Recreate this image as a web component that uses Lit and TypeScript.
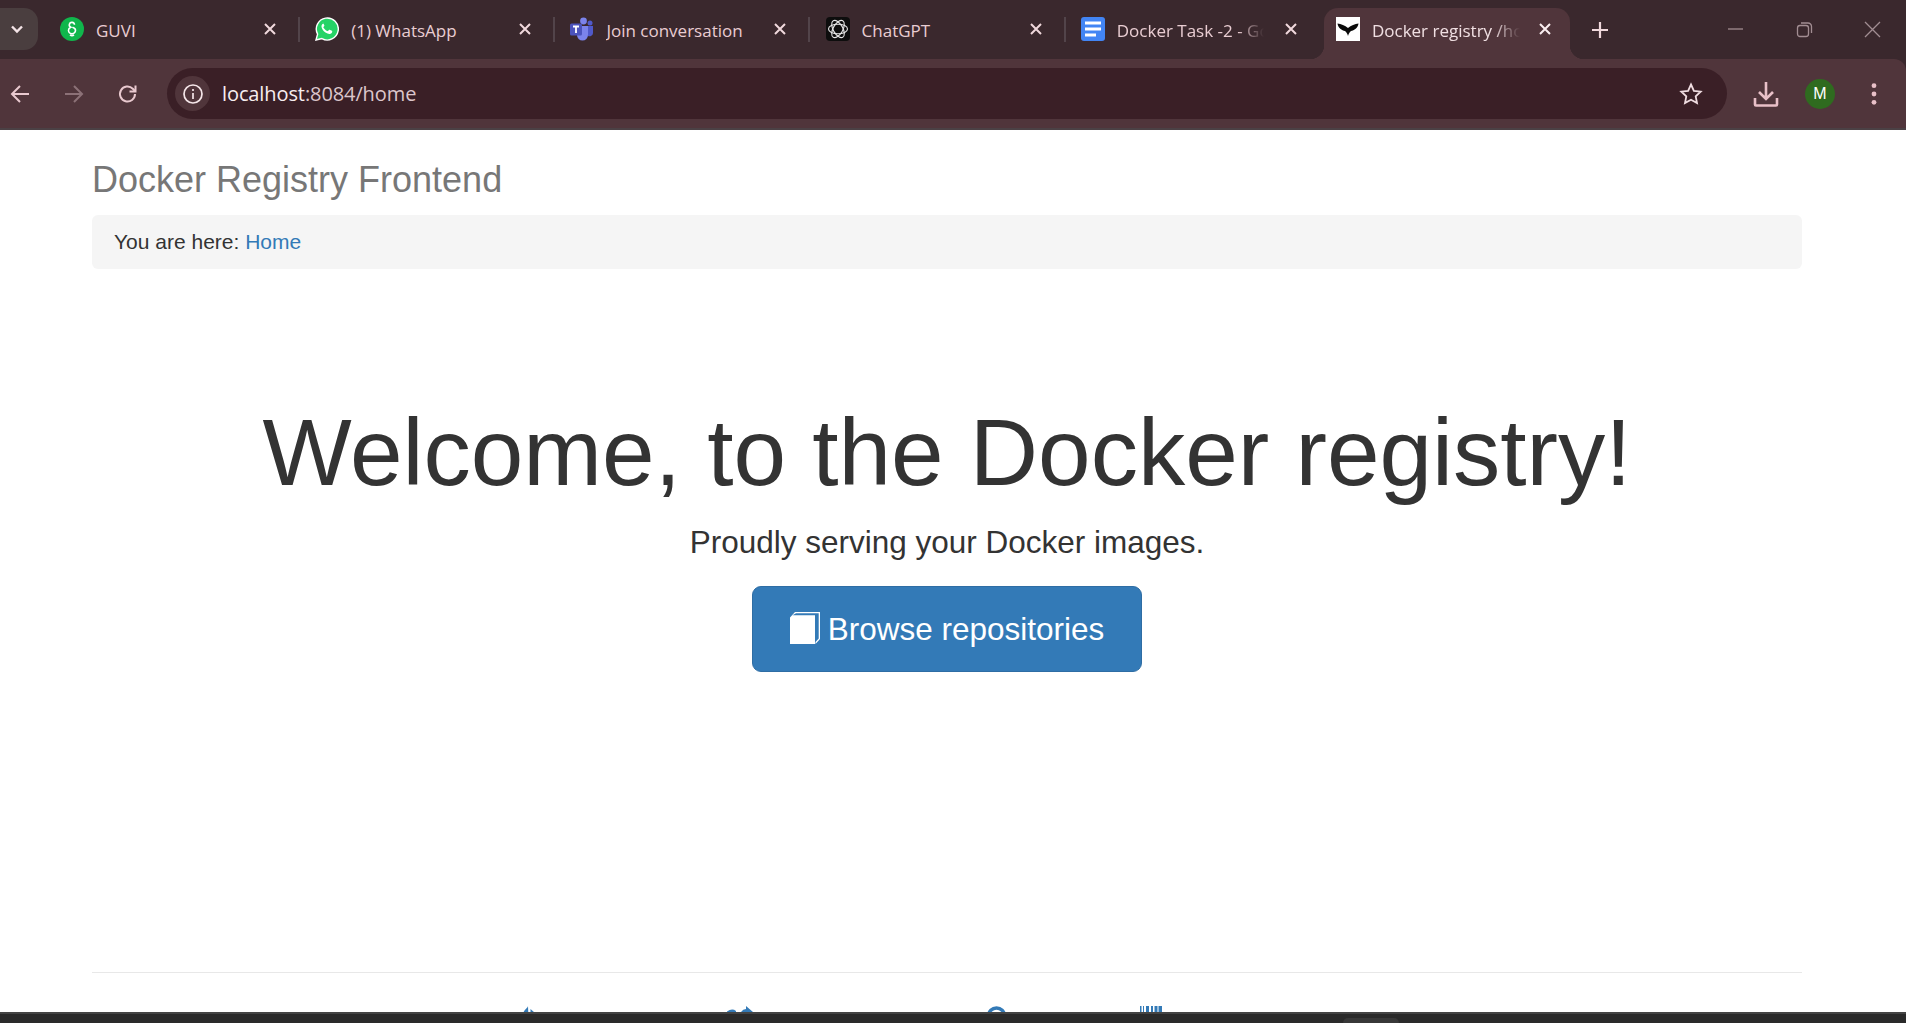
import { LitElement, css, html, svg } from 'lit';
import { customElement } from 'lit/decorators.js';

const closeIcon = html`<svg class="close" viewBox="0 0 14 14"><path d="M2 2l10 10M12 2L2 12" /></svg>`;

const favicons = {
  guvi: html`<svg class="fav" viewBox="0 0 24 24">
    <circle cx="12" cy="12" r="12" fill="#10b64c" />
    <path d="M14.500 7.800a2.600 2.600 0 1 0-3.700 2.500c-1.500.7-2.300 1.800-2.300 3a3.500 3.500 0 0 0 7 0c0-1.500-1.500-2.500-3-3M10 17.800c1 .8 3 .8 4 0" fill="none" stroke="#fff" stroke-width="1.600" />
  </svg>`,
  whatsapp: html`<svg class="fav" viewBox="0 0 24 24">
    <path d="M1 23l1.600-5.800A11 11 0 1 1 6.900 21.600z" fill="#25d366" stroke="#fff" stroke-width="1.400" />
    <path d="M8.600 6.500c-.4 0-1 .2-1.400.8-.6.8-.9 1.800-.6 3 .5 2 2 4 3.900 5.200 1.800 1.200 3.700 1.700 5 1.200.9-.3 1.600-1.100 1.700-2 .1-.5 0-.7-.3-.9l-2.300-1.100c-.3-.1-.5-.1-.7.2l-.9 1.100c-.2.200-.4.200-.7.100-1.700-.7-3-1.900-3.900-3.500-.1-.3-.1-.5.100-.7l.7-.9c.2-.2.200-.4.100-.7l-1-2.300c-.2-.4-.4-.5-.7-.5z" fill="#fff" />
  </svg>`,
  teams: html`<svg class="fav" viewBox="0 0 24 24">
    <circle cx="13.500" cy="4" r="3.400" fill="#7b83eb" />
    <circle cx="20" cy="6" r="2.500" fill="#5059c9" />
    <path d="M16 9h7v7a3.500 3.500 0 0 1-5 3z" fill="#5059c9" />
    <path d="M7 9h11v9a5.500 5.500 0 0 1-11 0z" fill="#7b83eb" />
    <rect x="0" y="6.500" width="12" height="12" rx="1.500" fill="#4b53bc" />
    <path d="M3 9.500h6M6 9.500v6.500" stroke="#fff" stroke-width="1.800" fill="none" />
  </svg>`,
  chatgpt: html`<svg class="fav" viewBox="0 0 24 24">
    <rect width="24" height="24" rx="4" fill="#0d0d0d" />
    <g fill="none" stroke="#e6e6e6" stroke-width="1.100">
      <ellipse cx="12" cy="12" rx="9.500" ry="4.800" />
      <ellipse cx="12" cy="12" rx="9.500" ry="4.800" transform="rotate(60 12 12)" />
      <ellipse cx="12" cy="12" rx="9.500" ry="4.800" transform="rotate(120 12 12)" />
    </g>
  </svg>`,
  docs: html`<svg class="fav" viewBox="0 0 24 24">
    <rect width="24" height="24" rx="3" fill="#4285f4" />
    <path d="M4 4.500h16v3H4zM4 10.500h16v3H4zM4 16.500h11v3H4z" fill="#fff" />
  </svg>`,
  registry: html`<svg class="fav" viewBox="0 0 24 24">
    <rect width="24" height="24" fill="#fff" />
    <path d="M1.500 6.500C5 7 9 8.500 12 11c3-2.500 7-4 10.500-4.500C22 11 18 13.500 15 14c-1.500 1-2.500 3-3 5-.5-2-1.500-4-3-5C6 13.500 2 11 1.500 6.500z" fill="#0a0a0a" />
  </svg>`,
};

const tabs = [
  { title: 'GUVI', icon: favicons.guvi },
  { title: '(1) WhatsApp', icon: favicons.whatsapp },
  { title: 'Join conversation', icon: favicons.teams },
  { title: 'ChatGPT', icon: favicons.chatgpt },
  { title: 'Docker Task -2 - Google Docs', icon: favicons.docs },
  { title: 'Docker registry /home', icon: favicons.registry, active: true },
];

const bookPath = svg`<path d="M0 5.500L5 0H30V27L25.500 32V30L28.700 26.500V1.300H6L2.500 3.300H25V32H0z" fill="#fff" />`;

@customElement('app-root')
export class AppRoot extends LitElement {
  static styles = css`
    :host {
      display: flex;
      flex-direction: column;
      height: 1023px;
      overflow: hidden;
      background: #fff;
      font-family: 'Liberation Sans', Arial, sans-serif;
      color: #333;
    }

    .chrome {
      flex: none;
      background: #3a282d;
    }

    .strip {
      height: 59px;
      display: flex;
      font-family: 'Open Sans', sans-serif;
    }

    .tab-search {
      flex: none;
      width: 38px;
      height: 42px;
      margin: 8px 22px 0 0;
      border-radius: 0 14px 14px 0;
      background: #4a3e3f;
      display: flex;
      align-items: center;
      justify-content: center;
    }

    .tab-search svg {
      width: 14px;
      height: 14px;
      margin-left: -4px;
      fill: none;
      stroke: #f4e4e7;
      stroke-width: 2.400;
    }

    .tab {
      flex: none;
      width: 255.200px;
      box-sizing: border-box;
      height: 42px;
      margin-top: 8px;
      display: flex;
      align-items: center;
      position: relative;
    }

    .tab.active {
      width: 246px;
      height: 51px;
      margin-left: -12px;
      padding-left: 12px;
      padding-bottom: 9px;
      border-radius: 14px 14px 0 0;
      background: #50353b;
    }

    .tab.active::before,
    .tab.active::after {
      content: '';
      position: absolute;
      bottom: 0;
      width: 14px;
      height: 14px;
    }

    .tab.active::before {
      left: -14px;
      background: radial-gradient(circle at 0 0, transparent 14px, #50353b 14.500px);
    }

    .tab.active::after {
      right: -14px;
      background: radial-gradient(circle at 100% 0, transparent 14px, #50353b 14.500px);
    }

    .tab:not(.active):not(.last)::after {
      content: '';
      position: absolute;
      left: 238px;
      top: 9px;
      width: 2px;
      height: 25px;
      background: #52444a;
    }

    .fav {
      flex: none;
      width: 24px;
      height: 24px;
    }

    .title {
      flex: none;
      width: 147px;
      margin-left: 12px;
      padding-top: 2px;
      overflow: hidden;
      white-space: nowrap;
      font-size: 17px;
      color: #e9cdd2;
    }

    .title.fade {
      -webkit-mask-image: linear-gradient(to right, #000 82%, transparent 100%);
      mask-image: linear-gradient(to right, #000 82%, transparent 100%);
    }

    .close {
      flex: none;
      width: 14px;
      height: 14px;
      margin-left: 20px;
      fill: none;
      stroke: #f0d8dc;
      stroke-width: 2;
    }

    .tab.active .title {
      width: 148px;
      color: #f0dfe2;
    }

    .tab.active .close {
      margin-left: 18px;
      stroke: #fbeef0;
    }

    .new-tab {
      flex: none;
      width: 18px;
      height: 18px;
      margin: 21px 0 0 21px;
      stroke: #f0d8dc;
      stroke-width: 2.200;
      fill: none;
    }

    .window-controls {
      margin-left: auto;
      display: flex;
      gap: 51.500px;
      padding: 21px 25px 0 0;
    }

    .window-controls svg {
      width: 17px;
      height: 17px;
      fill: none;
      stroke: #a28d92;
      stroke-width: 1.300;
    }

    .toolbar {
      height: 69px;
      border-bottom: 2px solid #4b4145;
      border-top-right-radius: 12px;
      background: #50353b;
      display: flex;
      align-items: center;
    }

    .nav-icon {
      flex: none;
      width: 22px;
      height: 22px;
      margin-left: 9px;
      margin-right: 23px;
      fill: none;
      stroke: #e9c9cf;
      stroke-width: 2;
    }

    .nav-icon.dim {
      stroke: #8c7177;
    }

    .omnibox {
      flex: none;
      box-sizing: border-box;
      width: 1560px;
      height: 51px;
      margin-left: 5px;
      border-radius: 26px;
      background: #3a1f26;
      display: flex;
      align-items: center;
      padding: 0 24px 0 8px;
      font-family: 'Open Sans', sans-serif;
      font-size: 20px;
    }

    .site-info {
      flex: none;
      width: 35px;
      height: 35px;
      border-radius: 50%;
      background: #50353b;
      display: flex;
      align-items: center;
      justify-content: center;
    }

    .site-info svg {
      width: 22px;
      height: 22px;
      fill: none;
      stroke: #f5e6e9;
      stroke-width: 1.700;
    }

    .url {
      margin-left: 12px;
      color: #f8eef0;
      letter-spacing: -0.100px;
    }

    .url span {
      color: #dcc6cb;
    }

    .star {
      margin-left: auto;
      width: 24px;
      height: 24px;
      fill: none;
      stroke: #f0dde1;
      stroke-width: 1.800;
    }

    .download {
      flex: none;
      width: 26px;
      height: 26px;
      margin-left: 26px;
      fill: none;
      stroke: #e9c0c8;
      stroke-width: 2.600;
    }

    .avatar {
      flex: none;
      width: 30px;
      height: 30px;
      margin-left: 26px;
      border-radius: 50%;
      background: #2f6b1f;
      color: #fff;
      font-size: 16px;
      line-height: 30px;
      text-align: center;
    }

    .menu {
      flex: none;
      width: 8px;
      height: 26px;
      margin-left: 35px;
      fill: #e9c0c8;
    }

    .page {
      flex: 1;
      min-height: 0;
      overflow: hidden;
      padding: 0 104px 0 92px;
    }

    .brand {
      height: 85px;
      line-height: 100px;
      font-size: 36px;
      color: #777;
      white-space: nowrap;
    }

    .breadcrumb {
      box-sizing: border-box;
      height: 54px;
      padding: 0 22px;
      line-height: 54px;
      border-radius: 6px;
      background: #f5f5f5;
      font-size: 21px;
    }

    .breadcrumb a {
      color: #337ab7;
      text-decoration: none;
    }

    .hero {
      height: 704px;
      padding-top: 131px;
      box-sizing: border-box;
      text-align: center;
      border-bottom: 1px solid #e8e8e8;
    }

    .hero h1 {
      margin: 0;
      font-size: 94.500px;
      font-weight: 400;
      line-height: 104px;
      color: #333;
    }

    .hero p {
      margin: 16px 0 0;
      font-size: 31.500px;
      line-height: 45px;
    }

    .btn {
      display: inline-flex;
      align-items: center;
      gap: 8px;
      box-sizing: border-box;
      height: 86px;
      width: 390px;
      margin-top: 21px;
      justify-content: center;
      border: 1px solid #2e6da4;
      border-radius: 9px;
      background: #337ab7;
      color: #fff;
      font-size: 31.500px;
    }

    .btn svg {
      flex: none;
      width: 30px;
      height: 32px;
      margin-top: -3px;
    }

    .footer-icons {
      display: flex;
      padding: 33px 0 0 431px;
    }

    .footer-icons svg {
      flex: none;
      height: 24px;
      fill: #337ab7;
    }

    .footer-icons .tag {
      width: 12px;
    }

    .footer-icons .shuffle {
      width: 26px;
      margin-left: 192px;
    }

    .footer-icons .help {
      width: 19px;
      margin-left: 234px;
      fill: none;
      stroke: #337ab7;
      stroke-width: 3.500;
    }

    .footer-icons .barcode {
      width: 22px;
      margin-left: 134px;
    }

    .taskbar {
      flex: none;
      box-sizing: border-box;
      height: 11px;
      padding: 4px 0 0 1343px;
      border-top: 2px solid #444;
      background: #2a2a2a;
    }

    .taskbar div {
      width: 56px;
      height: 5px;
      border-radius: 6px 6px 0 0;
      background: #383838;
    }
  `;

  render() {
    return html`
      <div class="chrome">
        <div class="strip">
          <div class="tab-search">
            <svg viewBox="0 0 14 14"><path d="M2 4.500l5 5 5-5" /></svg>
          </div>
          ${tabs.map(
            (t, i) => html`
              <div class="tab ${t.active ? 'active' : ''} ${i === 4 ? 'last' : ''}">
                ${t.icon}
                <div class="title ${t.title.length > 20 ? 'fade' : ''}">${t.title}</div>
                ${closeIcon}
              </div>
            `,
          )}
          <svg class="new-tab" viewBox="0 0 18 18"><path d="M9 1v16M1 9h16" /></svg>
          <div class="window-controls">
            <svg viewBox="0 0 17 17"><path d="M1 8h15" /></svg>
            <svg viewBox="0 0 17 17"><rect x="1.500" y="4.500" width="11" height="11" rx="2.500" /><path d="M5 2h7a3.500 3.500 0 0 1 3.500 3.500V12" /></svg>
            <svg viewBox="0 0 17 17"><path d="M1 1l15 15M16 1L1 16" /></svg>
          </div>
        </div>

        <div class="toolbar">
          <svg class="nav-icon" viewBox="0 0 22 22"><path d="M20 11H3M11 3l-8 8 8 8" /></svg>
          <svg class="nav-icon dim" viewBox="0 0 22 22"><path d="M2 11h17M11 3l8 8-8 8" /></svg>
          <svg class="nav-icon" viewBox="0 0 22 22"><path d="M18 11a7.500 7.500 0 1 1-2.200-5.300L18 8" /><path d="M18.500 2.500V8.500H12.500" /></svg>
          <div class="omnibox">
            <div class="site-info">
              <svg viewBox="0 0 22 22"><circle cx="11" cy="11" r="9" /><path d="M11 10v6M11 6v2" /></svg>
            </div>
            <div class="url">localhost<span>:8084/home</span></div>
            <svg class="star" viewBox="0 0 24 24"><path d="M12 2.500l2.900 6.300 6.800.8-5 4.700 1.300 6.800-6-3.400-6 3.400 1.300-6.800-5-4.700 6.800-.8z" /></svg>
          </div>
          <svg class="download" viewBox="0 0 26 26"><path d="M13 1v16M6 11l7 7 7-7M2 17v6.500a1 1 0 0 0 1 1h20a1 1 0 0 0 1-1V17" /></svg>
          <div class="avatar">M</div>
          <svg class="menu" viewBox="0 0 8 26"><circle cx="4" cy="4.700" r="2.400" /><circle cx="4" cy="13" r="2.400" /><circle cx="4" cy="21.300" r="2.400" /></svg>
        </div>
      </div>

      <div class="page">
        <div class="brand">Docker Registry Frontend</div>
        <div class="breadcrumb">You are here: <a>Home</a></div>
        <div class="hero">
          <h1>Welcome, to the Docker registry!</h1>
          <p>Proudly serving your Docker images.</p>
          <div class="btn"><svg viewBox="0 0 30 32">${bookPath}</svg>Browse repositories</div>
        </div>
        <div class="footer-icons">
          <svg class="tag" viewBox="0 0 12 24"><path d="M5 0C5 2 0 4 0 9V24H6z" /><path d="M7.500 3L12 7V24H7.500z" /></svg>
          <svg class="shuffle" viewBox="0 0 26 24"><path d="M0 5.500Q5 2 9 5V24H0z" /><path d="M19 0L26 6V24H14V6Q16 3 19 3z" /></svg>
          <svg class="help" viewBox="0 0 19 24"><circle cx="9.500" cy="10" r="8" /></svg>
          <svg class="barcode" viewBox="0 0 22 24"><path d="M0 0h1.500v24H0zM3 0h1v24H3zM6 0h3v24H6zM11 0h2v24h-2zM14.500 0h3v24h-3zM18.500 0H22v24h-3.500z" /></svg>
        </div>
      </div>
      <div class="taskbar"><div></div></div>
    `;
  }
}
